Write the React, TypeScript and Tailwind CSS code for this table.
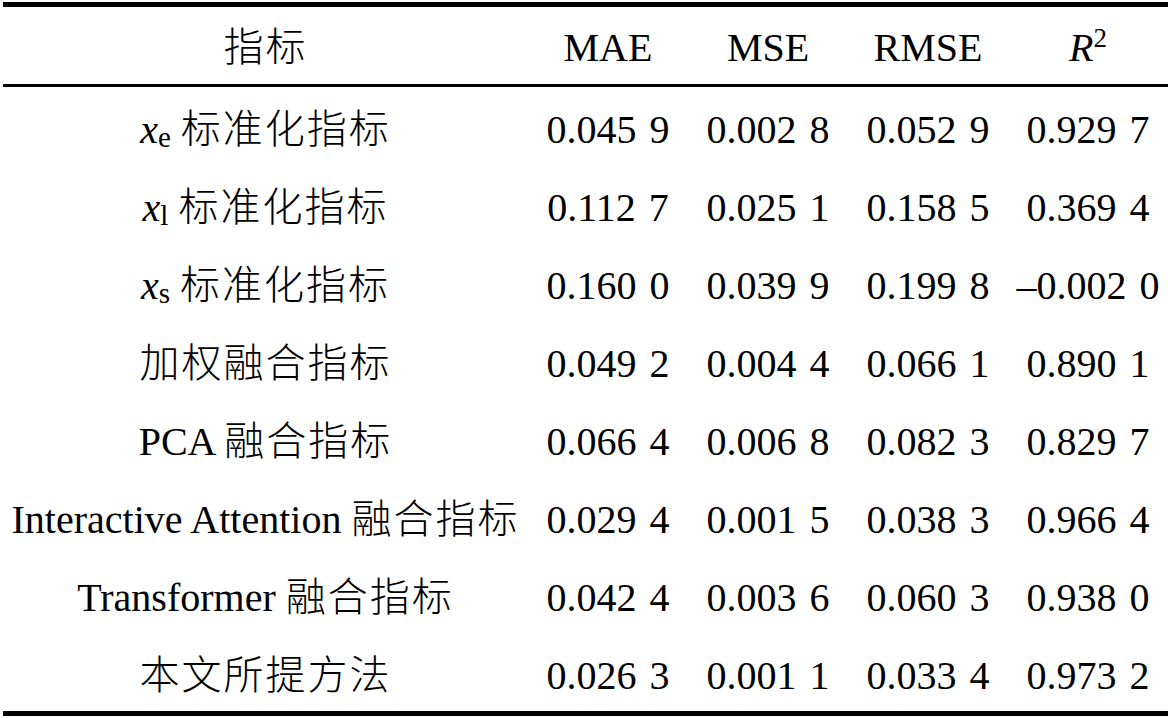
import React from 'react';

type Row = {
  label: React.ReactNode;
  mae: string;
  mse: string;
  rmse: string;
  r2: string;
};

const Zh: React.FC<{ children: React.ReactNode }> = ({ children }) => (
  <span className="tracking-[2px] font-light">{children}</span>
);

const Sub: React.FC<{ sym: string; sub: string }> = ({ sym, sub }) => (
  <span>
    <i>{sym}</i>
    <span className="relative top-[4px] text-[29px]">{sub}</span>
  </span>
);

// numbers are typeset with a wide gap after the third decimal
const Num: React.FC<{ value: string }> = ({ value }) => {
  const [head, tail] = value.split(' ');
  return (
    <span className="whitespace-nowrap">
      {head}
      <span className="inline-block w-[13px]" />
      {tail}
    </span>
  );
};

const rows: Row[] = [
  { label: <><Sub sym="x" sub="e" /> <Zh>标准化指标</Zh></>, mae: '0.045 9', mse: '0.002 8', rmse: '0.052 9', r2: '0.929 7' },
  { label: <><Sub sym="x" sub="l" /> <Zh>标准化指标</Zh></>, mae: '0.112 7', mse: '0.025 1', rmse: '0.158 5', r2: '0.369 4' },
  { label: <><Sub sym="x" sub="s" /> <Zh>标准化指标</Zh></>, mae: '0.160 0', mse: '0.039 9', rmse: '0.199 8', r2: '–0.002 0' },
  { label: <Zh>加权融合指标</Zh>, mae: '0.049 2', mse: '0.004 4', rmse: '0.066 1', r2: '0.890 1' },
  { label: <>PCA <Zh>融合指标</Zh></>, mae: '0.066 4', mse: '0.006 8', rmse: '0.082 3', r2: '0.829 7' },
  { label: <>Interactive Attention <Zh>融合指标</Zh></>, mae: '0.029 4', mse: '0.001 5', rmse: '0.038 3', r2: '0.966 4' },
  { label: <>Transformer <Zh>融合指标</Zh></>, mae: '0.042 4', mse: '0.003 6', rmse: '0.060 3', r2: '0.938 0' },
  { label: <Zh>本文所提方法</Zh>, mae: '0.026 3', mse: '0.001 1', rmse: '0.033 4', r2: '0.973 2' },
];

const gridCols = 'grid grid-cols-[525px_160px_160px_160px_160px]';

export default function App() {
  return (
    <div
      className="w-[1168px] h-[718px] bg-white text-black overflow-hidden pl-[3px] pt-[2px]"
      style={{ fontFamily: "'Liberation Serif', 'Noto Sans CJK SC', serif" }}
    >
      <div className="w-[1165px] border-t-[5px] border-b-[5px] border-black text-[40px] leading-none">
        {/* header */}
        <div className={`${gridCols} h-[80px] border-b-[3px] border-black items-center pt-[4px] text-center`}>
          <div><Zh>指标</Zh></div>
          <div>MAE</div>
          <div>MSE</div>
          <div>RMSE</div>
          <div>
            <i>R</i>
            <span className="relative -top-[14px] text-[27px]">2</span>
          </div>
        </div>

        {rows.map((r, i) => (
          <div key={i} className={`${gridCols} h-[78px] items-center pt-[7px] text-center`}>
            <div className="whitespace-nowrap">{r.label}</div>
            <div><Num value={r.mae} /></div>
            <div><Num value={r.mse} /></div>
            <div><Num value={r.rmse} /></div>
            <div><Num value={r.r2} /></div>
          </div>
        ))}
      </div>
    </div>
  );
}
